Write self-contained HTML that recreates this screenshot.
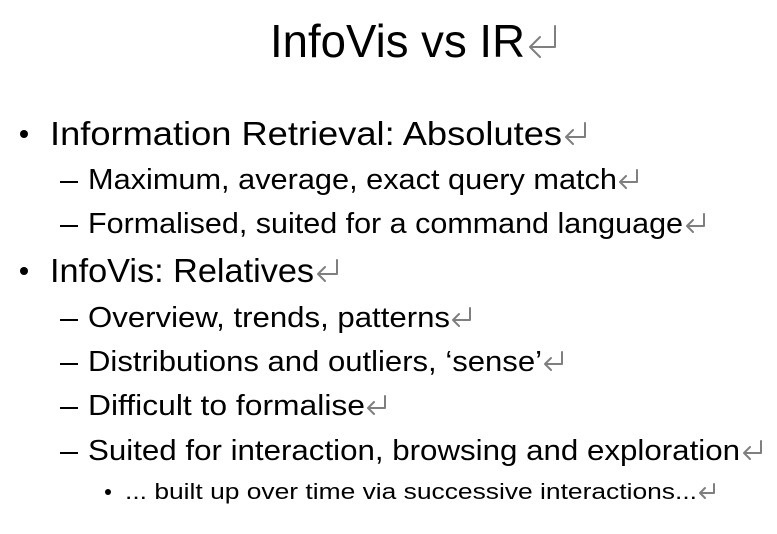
<!DOCTYPE html>
<html><head><meta charset="utf-8"><style>
html,body{margin:0;padding:0;background:#fff;width:777px;height:534px;overflow:hidden}
svg{display:block}
text{font-family:"Liberation Sans",sans-serif;fill:#000}
.a{fill:none;stroke:#7f7f7f;stroke-width:2;stroke-linecap:round;stroke-linejoin:round}
</style></head><body>
<svg width="777" height="534" viewBox="0 0 777 534">
<text x="270" y="57" font-size="46" textLength="255" lengthAdjust="spacingAndGlyphs">InfoVis vs IR</text>
<path class="a" stroke-width="2.5" d="M555 26 L555 47 L530 47 M540 37 L530 47 L540 57"/>

<circle cx="24" cy="134" r="4"/>
<text x="50" y="145" font-size="33" textLength="512" lengthAdjust="spacingAndGlyphs">Information Retrieval:  Absolutes</text>
<path class="a" d="M585 123 L585 137 L566 137 M573 130 L566 137 L573 144"/>

<rect x="60" y="181" width="18" height="2"/>
<text x="88" y="189" font-size="29" textLength="529" lengthAdjust="spacingAndGlyphs">Maximum, average, exact query match</text>
<path class="a" d="M637 170 L637 182 L620 182 M626 176 L620 182 L626 188"/>

<rect x="60" y="225" width="18" height="2"/>
<text x="88" y="233" font-size="29" textLength="595" lengthAdjust="spacingAndGlyphs">Formalised, suited for a command language</text>
<path class="a" d="M704 214 L704 226 L687 226 M693 220 L687 226 L693 232"/>

<circle cx="24" cy="271" r="4"/>
<text x="50" y="282" font-size="33" textLength="264" lengthAdjust="spacingAndGlyphs">InfoVis: Relatives</text>
<path class="a" d="M337 260 L337 274 L318 274 M325 267 L318 274 L325 281"/>

<rect x="60" y="319" width="18" height="2"/>
<text x="88" y="327" font-size="29" textLength="362" lengthAdjust="spacingAndGlyphs">Overview, trends, patterns</text>
<path class="a" d="M470 308 L470 320 L453 320 M459 314 L453 320 L459 326"/>

<rect x="60" y="363" width="18" height="2"/>
<text x="88" y="371" font-size="29" textLength="454" lengthAdjust="spacingAndGlyphs">Distributions and outliers, ‘sense’</text>
<path class="a" d="M562 352 L562 364 L545 364 M551 358 L545 364 L551 370"/>

<rect x="60" y="407" width="18" height="2"/>
<text x="88" y="415" font-size="29" textLength="277" lengthAdjust="spacingAndGlyphs">Difficult to formalise</text>
<path class="a" d="M385 396 L385 408 L368 408 M374 402 L368 408 L374 414"/>

<rect x="60" y="452" width="18" height="2"/>
<text x="88" y="460" font-size="29" textLength="652" lengthAdjust="spacingAndGlyphs">Suited for interaction, browsing and exploration</text>
<path class="a" d="M761 441 L761 453 L744 453 M750 447 L744 453 L750 459"/>

<circle cx="108" cy="492" r="3"/>
<text x="125" y="499" font-size="22" textLength="572" lengthAdjust="spacingAndGlyphs">... built up over time via successive interactions...</text>
<path class="a" stroke-width="1.5" d="M714 484 L714 493 L700 493 M705 488 L700 493 L705 498"/>
</svg>
</body></html>
